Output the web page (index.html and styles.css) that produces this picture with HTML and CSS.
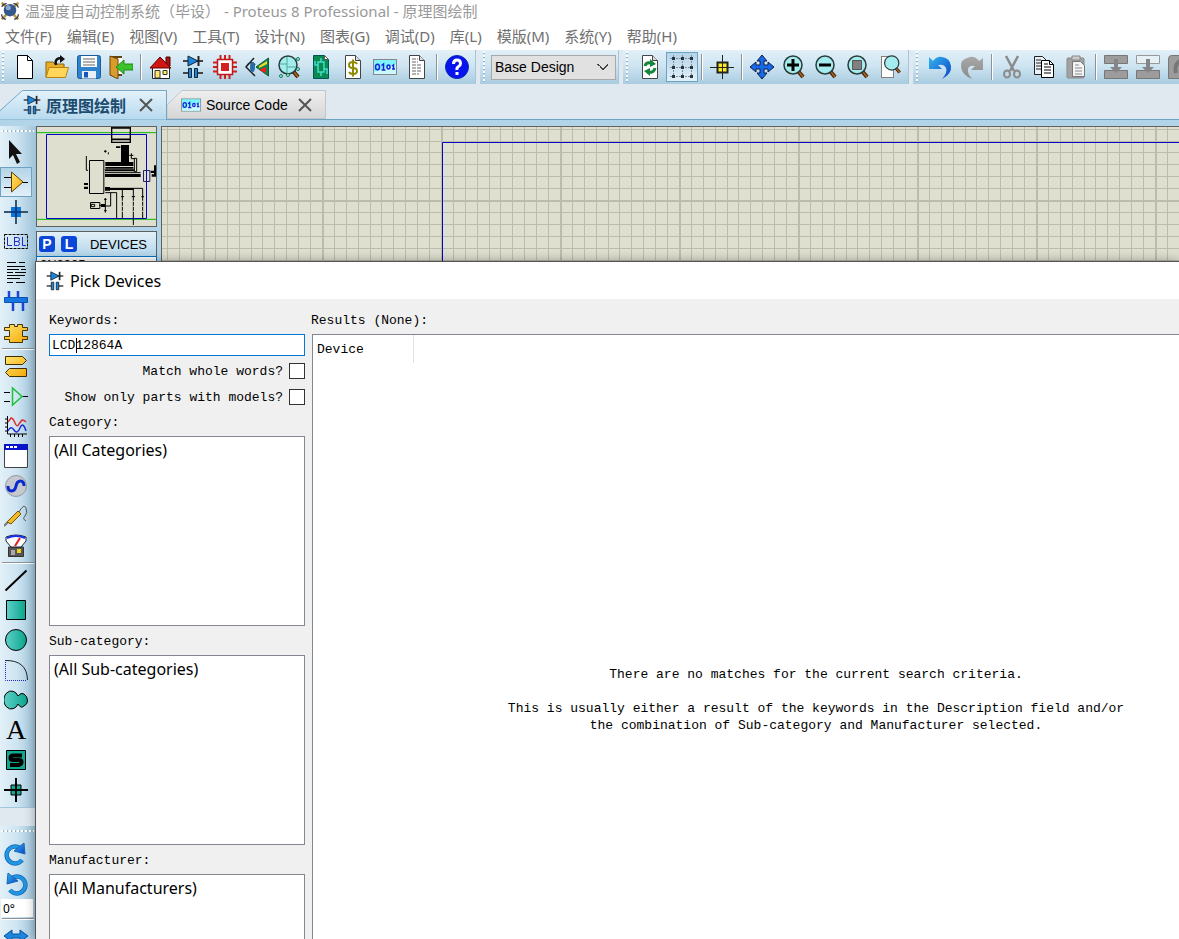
FILE: index.html
```html
<!DOCTYPE html>
<html lang="zh-CN">
<head>
<meta charset="utf-8">
<title>Proteus 8 Professional - 原理图绘制</title>
<link rel="stylesheet" href="styles.css">
</head>
<body>
<svg class="defs" aria-hidden="true">
  <defs>
    <linearGradient id="blue" x1="0" y1="0" x2="1" y2="1"><stop offset="0" stop-color="#35b4ee"/><stop offset="1" stop-color="#0846c8"/></linearGradient>
    <linearGradient id="gold" x1="0" y1="0" x2="1" y2="1"><stop offset="0" stop-color="#ffe36b"/><stop offset="1" stop-color="#f5a90a"/></linearGradient>
    <linearGradient id="teal" x1="0" y1="0" x2="1" y2="0"><stop offset="0" stop-color="#5fd0c8"/><stop offset="1" stop-color="#0aa58d"/></linearGradient>
    <linearGradient id="grey" x1="0" y1="0" x2="0" y2="1"><stop offset="0" stop-color="#a8a8a8"/><stop offset="1" stop-color="#8a8a8a"/></linearGradient>
    <linearGradient id="tabOn" x1="0" y1="0" x2="0" y2="1"><stop offset="0" stop-color="#e4f2fb"/><stop offset="1" stop-color="#b6d9ee"/></linearGradient>
    <linearGradient id="tabOff" x1="0" y1="0" x2="0" y2="1"><stop offset="0" stop-color="#efefef"/><stop offset="1" stop-color="#d6d6d6"/></linearGradient>
    <symbol id="schematic" viewBox="0 0 24 24">
      <path d="M2 6h20M2 18h6M16 18h6" stroke="#444" stroke-width="2"/>
      <path d="M7 1v10l10-5z" fill="#1b86dc" stroke="#123" stroke-width="1"/>
      <path d="M17.500 1v10" stroke="#222" stroke-width="2"/>
      <path d="M7.500 13.500h3v9h-3zM13.500 13.500h3v9h-3z" fill="#1b86dc" stroke="#123"/>
    </symbol>
    <symbol id="lens" viewBox="0 0 24 24">
      <path d="M16 16l5 6" stroke="#3b2008" stroke-width="4"/><path d="M17 17l4 5" stroke="#a8641c" stroke-width="2"/>
      <circle cx="11" cy="10" r="9" fill="#a5ecee" stroke="#2b3c3c" stroke-width="1.500"/>
    </symbol>
    <symbol id="sheet" viewBox="0 0 24 24"><path d="M4.500.500h10l5 5v18h-15z" fill="#fff" stroke="#444"/><path d="M14.500.500v5h5" fill="#ddd" stroke="#444"/></symbol>
    <symbol id="source" viewBox="0 0 24 16">
      <rect x=".5" y=".5" width="23" height="15" fill="#7df3fb" stroke="#888"/><path d="M1 13L23 5v10H1z" fill="#fff" opacity=".6"/>
      <g fill="none" stroke="#1524d8" stroke-width="1.500"><ellipse cx="4.500" cy="8" rx="2" ry="2.800"/><path d="M8.500 6.500l2-1.500v6M8.500 11h4"/><ellipse cx="15.500" cy="8" rx="1.500" ry="2"/><path d="M19 7l1.500-1v4M19 10h3"/></g>
    </symbol>
    <symbol id="turn" viewBox="0 0 24 24"><path d="M18 18A8.500 8.500 0 1 1 16 6" fill="none" stroke="#1768b8" stroke-width="4.500"/><path d="M18 18A8.500 8.500 0 1 1 16 6" fill="none" stroke="#2196e3" stroke-width="3"/><path d="M20 1l1 11-11-3z" fill="url(#blue)" stroke="#1768b8"/></symbol>
  </defs>
</svg>

<header class="titlebar">
  <svg class="logo" viewBox="0 0 24 24"><path d="M2 2l20 20M22 2L2 22" stroke="#b89a4a" stroke-width="3"/><path d="M2 7q2-4 6-4M16 3q5 0 6 5M2 16q0 5 5 6M22 16q0 5-5 6" fill="none" stroke="#334" stroke-width="1.500"/><circle cx="12" cy="11" r="7.500" fill="#34588e"/><circle cx="10" cy="8" r="3" fill="#8caace"/></svg>
  <h1>温湿度自动控制系统（毕设） - Proteus 8 Professional - 原理图绘制</h1>
</header>
<nav class="menubar">
  <button>文件(F)</button><button>编辑(E)</button><button>视图(V)</button><button>工具(T)</button><button>设计(N)</button><button>图表(G)</button><button>调试(D)</button><button>库(L)</button><button>模版(M)</button><button>系统(Y)</button><button>帮助(H)</button>
</nav>

<div class="toolbars">
  <div class="group first">
    <button aria-label="New"><svg viewBox="0 0 24 24"><path d="M4.500.500h10l5 5v18h-15z" fill="#fff" stroke="#000"/><path d="M14.500.500v5h5" fill="none" stroke="#000"/></svg></button>
    <button aria-label="Open"><svg viewBox="0 0 24 24"><path d="M1 22V7h7l2 2h9v4" fill="#e9ae26" stroke="#8a6410"/><path d="M1 22.500l3-10h19.500l-3 10z" fill="#ffd65a" stroke="#b98310"/><path d="M11 10q-2-7 6-7" fill="none" stroke="#111" stroke-width="2.500"/><path d="M15 0l5 4-5 4z" fill="#111"/></svg></button>
    <button aria-label="Save"><svg viewBox="0 0 24 24"><rect x=".5" y=".5" width="23" height="23" rx="2" fill="#2e83cc" stroke="#1a5c9c"/><path d="M4 1h16v11H4z" fill="#fff"/><path d="M6 4h12M6 7h12M6 10h12" stroke="#999" stroke-width="1.500"/><path d="M5 16h14v7.500H5z" fill="#e8eef5"/><path d="M7 17h4v5.500H7z" fill="#1556b8"/></svg></button>
    <button aria-label="Close"><svg viewBox="0 0 24 24"><path d="M1 1h12v20H1z" fill="#5f4310"/><path d="M4 3h9v16H4z" fill="#fff"/><path d="M1 1l8 3v20l-8-4z" fill="#d99b2b" stroke="#6a4508"/><path d="M7 12l8-7v4h9v6h-9v4z" fill="#3cc22a" stroke="#238a18"/></svg></button>
    <i class="sep"></i>
    <button aria-label="Home"><svg viewBox="0 0 24 24"><path d="M17 2h4v9h-4z" fill="#a11" stroke="#500"/><path d="M3.500 12h17v11.500h-17z" fill="#fff" stroke="#222"/><path d="M1 13L11 2l11 11z" fill="#cf1515" stroke="#600"/><path d="M6 15.500h5V23H6z" fill="#ffe566" stroke="#333"/><path d="M14 15.500h4v4h-4z" fill="#ffee50" stroke="#333"/></svg></button>
    <button aria-label="Schematic"><svg><use href="#schematic"/></svg></button>
    <button aria-label="PCB"><svg viewBox="0 0 24 24"><path d="M7.500 0v24M12 0v24M16.500 0v24M0 7.500h24M0 12h24M0 16.500h24" stroke="#d02020" stroke-width="2"/><rect x="4.500" y="4.500" width="15" height="15" fill="#fff" stroke="#c01818" stroke-width="1.500"/><rect x="8" y="8" width="8" height="8" fill="#d32020"/></svg></button>
    <button aria-label="3D viewer"><svg viewBox="0 0 24 24"><path d="M9 3L1 12l9 9M1 12q5-8 9-2" fill="none" stroke="#222" stroke-width="1.500"/><ellipse cx="7.500" cy="12" rx="2.500" ry="5" fill="#236eaa"/><path d="M11 12L23.500 3v18z" fill="#13824c" stroke="#0a5c35"/><path d="M14 11l8-5v3l-8 4z" fill="#f5dd20"/><path d="M14 15l7-3v6z" fill="#f02020"/></svg></button>
    <button aria-label="Gerber"><svg viewBox="0 0 24 24"><use href="#lens"/><path d="M3 9h7V2M10 9v9M10 12h9M17 4l4-1" fill="none" stroke="#4fa99a"/><g fill="#a5ecde" stroke="#147a55"><circle cx="4" cy="21" r="1.500"/><circle cx="11" cy="20" r="1.500"/><circle cx="21" cy="4" r="1.500"/><circle cx="21" cy="14" r="1.500"/></g></svg></button>
    <button aria-label="Design explorer"><svg viewBox="0 0 24 24"><path d="M4.500.500h11l4 4v19h-15z" fill="#0a8a50" stroke="#055"/><path d="M15.500.500v4h4z" fill="#fff" stroke="#555"/><path d="M9 7h6v10H9zM12 7V3M12 17v4M9 10H6v-4M15 14h3v5" fill="none" stroke="#43dcc8" stroke-width="1.500"/></svg></button>
    <button aria-label="Bill of materials"><svg viewBox="0 0 24 24"><use href="#sheet"/><path d="M16 9q-1-2-4-2-4 0-4 3t4 3q4 0 4 3t-4 3q-3 0-4-2M12 4.500v17" fill="none" stroke="#8c8a00" stroke-width="2"/></svg></button>
    <button aria-label="Source code"><svg viewBox="0 0 24 16"><use href="#source"/></svg></button>
    <button aria-label="Notes"><svg viewBox="0 0 24 24"><use href="#sheet"/><path d="M7 4h6M7 7h6M7 10h10M7 13h10M7 16h10M7 19h7" stroke="#666" stroke-dasharray="4 1"/></svg></button>
    <i class="sep"></i>
    <button aria-label="Help"><svg viewBox="0 0 24 24"><circle cx="12" cy="12" r="11.500" fill="#0714ee" stroke="#0c2bb0"/><path d="M8.500 9q0-4 3.500-4t3.500 3.500q0 2-2 3T12 15" fill="none" stroke="#fff" stroke-width="3"/><rect x="10.500" y="17" width="3" height="3" fill="#fff"/></svg></button>
  </div>
  <div class="group">
    <select class="design" aria-label="Design"><option>Base Design</option></select>
  </div>
  <div class="group">
    <button aria-label="Redraw"><svg viewBox="0 0 24 24"><use href="#sheet"/><path d="M7 11q1-4 6-3M17 13q-1 5-6 4" fill="none" stroke="#17853b" stroke-width="3"/><path d="M12 4l6 5-6 3zM12 21l-6-5 6-3z" fill="#17853b"/></svg></button>
    <button class="pressed" aria-label="Grid"><svg viewBox="0 0 24 24"><path d="M0 3.500h24M0 12.500h24M0 21.500h24M3.500 0v24M12.500 0v24M21.500 0v24" stroke="#7d909e" stroke-dasharray="2 1"/><path d="M2 3.500h3M11 3.500h3M20 3.500h3M2 12.500h3M11 12.500h3M20 12.500h3M2 21.500h3M11 21.500h3M20 21.500h3" stroke="#26323c" stroke-width="3"/></svg></button>
    <i class="sep"></i>
    <button aria-label="Origin"><svg viewBox="0 0 24 24"><path d="M7.500 7.500h10v10h-10z" fill="#ffe81c" stroke="#222" stroke-width="2"/><path d="M0 12.500h24M12.500 0v24" stroke="#222"/></svg></button>
    <i class="sep"></i>
    <button aria-label="Pan"><svg viewBox="0 0 24 24"><path d="M12 0l5 6h-3v4h4V7l6 5-6 5v-3h-4v4h3l-5 6-5-6h3v-4H6v3l-6-5 6-5v3h4V6H7z" fill="#1769e8" stroke="#0b1c48"/></svg></button>
    <button aria-label="Zoom in"><svg viewBox="0 0 24 24"><use href="#lens"/><path d="M5 10h12M11 4v12" stroke="#000" stroke-width="3"/></svg></button>
    <button aria-label="Zoom out"><svg viewBox="0 0 24 24"><use href="#lens"/><path d="M5 10h12" stroke="#000" stroke-width="3"/></svg></button>
    <button aria-label="Zoom all"><svg viewBox="0 0 24 24"><use href="#lens"/><path d="M6.500 5.500h9v9h-9z" fill="#808080" stroke="#555"/></svg></button>
    <button aria-label="Zoom area"><svg viewBox="0 0 24 24"><path d="M3 1h13v22H3z" fill="#fff"/><path d="M3.500 1.500h12v21h-12z" fill="none" stroke="#000" stroke-dasharray="1 1"/><use href="#lens" x="5" y="0" width="19" height="19"/></svg></button>
  </div>
  <div class="group last">
    <button aria-label="Undo"><svg viewBox="0 0 24 24"><path d="M1 2v12h13l-4-4q6-1 8 3t-4 11q10-5 9-13T14 2q-5-1-9 4z" fill="url(#blue)"/></svg></button>
    <button aria-label="Redo"><svg viewBox="0 0 24 24"><path d="M23 3v12H11l4-4q-6-1-7 3t4 10Q2 20 1 12t9-10q5-1 9 4z" fill="url(#grey)"/></svg></button>
    <i class="sep"></i>
    <button aria-label="Cut"><svg viewBox="0 0 24 24"><path d="M6 1l8 15M18 1l-8 15" stroke="#8b8b8b" stroke-width="2.500"/><g fill="none" stroke="#8b8b8b" stroke-width="2"><ellipse cx="7" cy="19" rx="3" ry="3.500"/><ellipse cx="17" cy="19" rx="3" ry="3.500"/></g></svg></button>
    <button aria-label="Copy"><svg viewBox="0 0 24 24"><path d="M2.500 1.500h8l4 4v14h-12z" fill="#e9f1f8" stroke="#222"/><path d="M4 5h5M4 8h5M4 11h5M4 14h5" stroke="#222"/><path d="M9.500 5.500h8l4 4v13h-12z" fill="#fff" stroke="#000"/><path d="M17.500 5.500v4h4M12 9h4M12 12h7M12 15h7M12 18h7" fill="none" stroke="#000"/></svg></button>
    <button aria-label="Paste"><svg viewBox="0 0 24 24"><rect x="3" y="3" width="17" height="20" rx="1" fill="#a2a2a2" stroke="#888"/><path d="M8 1h8v4H8z" fill="#ccc" stroke="#888"/><path d="M8.500 6.500h8l4 4v11h-12z" fill="#f4f4f4" stroke="#777"/><path d="M11 10h4M11 13h7M11 16h7M11 19h7" stroke="#888"/></svg></button>
    <i class="sep"></i>
    <button aria-label="Block copy"><svg viewBox="0 0 24 24"><path d="M.5.500h23v8H.5zM.5 15.500h23v8H.5z" fill="#9c9c9c" stroke="#777"/><path d="M10 4h4v8h4l-6 6-6-6h4z" fill="#858585"/></svg></button>
    <button aria-label="Block move"><svg viewBox="0 0 24 24"><path d="M.5.500h23v8H.5z" fill="#e6f0f7" stroke="#999"/><path d="M.5 15.500h23v8H.5z" fill="#9c9c9c" stroke="#777"/><path d="M10 4h4v8h4l-6 6-6-6h4z" fill="#858585"/></svg></button>
    <button aria-label="Block rotate"><svg viewBox="0 0 24 24"><path d="M.5 4q0-3.500 3-3.500h20v23H.5z" fill="#9c9c9c" stroke="#777"/><path d="M8 18q-2-8 4-12" fill="none" stroke="#777" stroke-width="4"/></svg></button>
  </div>
</div>

<div class="tabs">
  <div class="tab on">
    <svg class="shape" viewBox="0 0 167 32" preserveAspectRatio="none"><path d="M-1 23L22.500.500h144V32H-1z" fill="url(#tabOn)" stroke="#6fa3c4"/></svg>
    <svg class="ico" viewBox="0 0 24 24"><use href="#schematic"/></svg><span>原理图绘制</span>
    <button aria-label="Close tab"><svg viewBox="0 0 14 14"><path d="M1 1l12 12M13 1L1 13" stroke="#555" stroke-width="2"/></svg></button>
  </div>
  <div class="tab off">
    <svg class="shape" viewBox="0 0 159 29" preserveAspectRatio="none"><path d="M0 15L15 .5h143.500V28.500H0z" fill="url(#tabOff)" stroke="#c2c6ca"/></svg>
    <svg class="ico wide" viewBox="0 0 24 16"><use href="#source"/></svg><span>Source Code</span>
    <button aria-label="Close tab"><svg viewBox="0 0 14 14"><path d="M1 1l12 12M13 1L1 13" stroke="#555" stroke-width="2"/></svg></button>
  </div>
</div>

<main class="work">
  <aside class="modes">
    <div class="strip">
      <button aria-label="Select"><svg viewBox="0 0 24 24"><path d="M5 0v19l4-4 4 9 3-2-4-8h6z" fill="#111"/></svg></button>
      <button class="pressed" aria-label="Component"><svg viewBox="0 0 24 24"><path d="M0 7.500h8M0 17.500h8M18 12.500h6" stroke="#000"/><path d="M7.500 2v20L19 12z" fill="url(#gold)" stroke="#5c3f00"/></svg></button>
      <button aria-label="Junction"><svg viewBox="0 0 24 24"><path d="M0 12h24M12 0v24" stroke="#35566e" stroke-width="2"/><path d="M7 7h10v10H7z" fill="#0a76d8"/><path d="M12 7v10M7 12h10" stroke="#063e86" stroke-width="2"/></svg></button>
      <button aria-label="Label"><svg viewBox="0 0 24 24"><rect x=".5" y="4.500" width="23" height="14" fill="none" stroke="#000" stroke-dasharray="3 1"/><path d="M3.500 7v8.500H8M10.500 7v8.500h3q2 0 2-2t-2-2h-3h3q2 0 2-2t-2-2h-3M18.500 7v8.500H22" fill="none" stroke="#1c28c8"/></svg></button>
      <button aria-label="Text script"><svg viewBox="0 0 24 24"><path d="M3 2.500h9M15 2.500h6M3 6.500h18M3 9.500h12M17 9.500h5M3 12.500h6M11 12.500h11M3 15.500h18M3 18.500h13M3 22.500h6M12 22.500h9" stroke="#000"/></svg></button>
      <button aria-label="Bus"><svg viewBox="0 0 24 24"><path d="M5 1v8M14 1v8M9 13v8M19 13v8" stroke="#1846d8" stroke-width="2.500"/><path d="M.5 7.500h23v5H.5z" fill="#1677e0" stroke="#0c50b8"/></svg></button>
      <button aria-label="Subcircuit"><svg viewBox="0 0 24 24"><path d="M5.500 4.500h5v2h3v-2h5v3h5v3h-5v6h5v3h-5v3h-13v-3h-5v-3h5v-6h-5v-3h5z" fill="url(#gold)" stroke="#4a3500"/></svg></button>
      <i class="hsep"></i>
      <button aria-label="Terminal"><svg viewBox="0 0 24 24"><path d="M1.500 2.500h17l4 4-4 4h-17zM22.500 14.500h-17l-4 4 4 4h17z" fill="url(#gold)" stroke="#3f2e00"/></svg></button>
      <button aria-label="Device pin"><svg viewBox="0 0 24 24"><path d="M0 8.500h6M0 17.500h6M18 12.500h6" stroke="#000"/><path d="M8.500 4v17L18 12.500z" fill="none" stroke="#20c038" stroke-width="1.500"/></svg></button>
      <button aria-label="Graph"><svg viewBox="0 0 24 24"><path d="M3.500 2v18H23M1 5h2M1 9h2M1 13h2M1 17h2M6.500 20v3M10.500 20v3M14.500 20v3M18.500 20v3" fill="none" stroke="#000"/><path d="M4 8l3-4q2 0 4 5t4 1l3-4q2 0 4 2" fill="none" stroke="#e03030" stroke-width="1.500"/><path d="M4 17q3-6 6-1t6-2 6 3" fill="none" stroke="#1c30d8" stroke-width="1.500"/></svg></button>
      <button aria-label="Active popup"><svg viewBox="0 0 24 24"><path d="M.5.500h23v23H.5z" fill="#fff" stroke="#444"/><path d="M0 0h24v6H0z" fill="#0814c8"/><path d="M2 3h3M6 3h3M10 3h3" stroke="#fff" stroke-width="2"/></svg></button>
      <button aria-label="Generator"><svg viewBox="0 0 24 24"><circle cx="12" cy="12" r="10.500" fill="#c6c8d0" stroke="#999"/><path d="M4 12q0 5 3.500 5t4.500-5 4.500-5 3.500 5" fill="none" stroke="#0828d0" stroke-width="3"/></svg></button>
      <button aria-label="Probe"><svg viewBox="0 0 24 24"><path d="M0 22l7-7" stroke="#777" stroke-width="2"/><path d="M3 18L14 7l3 3L7 20z" fill="#f1bb28" stroke="#7a5500"/><path d="M15 8q5-9 7-4t-1 8 1 5" fill="none" stroke="#555"/></svg></button>
      <button aria-label="Instruments"><svg viewBox="0 0 24 24"><path d="M4.500 13h15v9.500h-15z" fill="#555" stroke="#333"/><path d="M2 3q10-4 20 0v4l-5 6H7L2 7z" fill="#fff" stroke="#223"/><path d="M3 4q9-4 18 0" fill="none" stroke="#1830e8" stroke-width="2"/><path d="M11 12l5-8" stroke="#e02020" stroke-width="2"/><path d="M13 15h4v4h-4z" fill="#f0d020"/><path d="M7 16h4v5H7z" fill="#aaa"/></svg></button>
      <i class="hsep"></i>
      <button aria-label="Line"><svg viewBox="0 0 24 24"><path d="M1.500 22.500l21-20" stroke="#000" stroke-width="2"/></svg></button>
      <button aria-label="Box"><svg viewBox="0 0 24 24"><path d="M2.500 2.500h19v19h-19z" fill="url(#teal)" stroke="#000"/></svg></button>
      <button aria-label="Circle"><svg viewBox="0 0 24 24"><circle cx="12" cy="12" r="10.500" fill="url(#teal)" stroke="#000"/></svg></button>
      <button aria-label="Arc"><svg viewBox="0 0 24 24"><path d="M1 2.500Q23 2 23.500 22" fill="none" stroke="#222"/><path d="M1.500 2v20.500H23" fill="none" stroke="#2424c8" stroke-dasharray="1 1"/></svg></button>
      <button aria-label="Path"><svg viewBox="0 0 24 24"><path d="M14 8A7.500 9 0 1 0 14 16Q17 21 20 18Q24 16 23.500 12T20 6Q17 4 14 8z" fill="url(#teal)" stroke="#000"/></svg></button>
      <button aria-label="Text" class="letter">A</button>
      <button aria-label="Symbol"><svg viewBox="0 0 24 24"><path d="M2.500 2.500h19v19h-19z" fill="#11a890" stroke="#000"/><path d="M18 7.500H9Q6.500 7.500 6.500 10T9 12h6q2.500 0 2.500 2T15 17H6" fill="none" stroke="#000" stroke-width="4"/></svg></button>
      <button aria-label="Marker"><svg viewBox="0 0 24 24"><path d="M7 7h10v10H7z" fill="#11a890" stroke="#000"/><path d="M0 12h24M12 0v24" stroke="#000" stroke-width="2"/></svg></button>
    </div>
    <div class="strip">
      <button aria-label="Rotate clockwise"><svg><use href="#turn"/></svg></button>
      <button aria-label="Rotate anticlockwise"><svg viewBox="0 0 24 24"><path d="M6 18A8.500 8.500 0 1 0 8 6" fill="none" stroke="#1768b8" stroke-width="4.500"/><path d="M6 18A8.500 8.500 0 1 0 8 6" fill="none" stroke="#2196e3" stroke-width="3"/><path d="M4 1L3 12l11-3z" fill="url(#blue)" stroke="#1768b8"/></svg></button>
      <input class="angle" aria-label="Angle" value="0°">
      <i class="hsep"></i>
      <button aria-label="Mirror"><svg viewBox="0 0 24 24"><path d="M0 12l8-6v4h8V6l8 6-8 6v-4H8v4z" fill="#1b86dc" stroke="#0c50a0"/></svg></button>
    </div>
  </aside>
  <aside class="side">
    <svg class="overview" viewBox="111 21 357 297" preserveAspectRatio="none">
      <path d="M111 38h357M111 298h357" stroke="#0ab80a" stroke-width="3"/>
      <path d="M139.500 43.500h300v252h-300z" fill="none" stroke="#0606c4" stroke-width="3"/>
      <g fill="none" stroke="#000" stroke-width="3"><path d="M335 21v46h56V21z" stroke-width="4"/><path d="M335 58h56M335 24h56" stroke-width="5"/><path d="M268.500 121.500h43v99h-43zM259 108v43h5M403 115h7v40h-7zM312 94h8M316 90v8M325 97v6M388 106h12M394 100v16h10M315 158h107M315 205h113v92M400 205v110M367 207v90M350 297V218h-34M332 218v40h-28M316 234v44M271.500 247.500h28v18h-28zM274 253h10v7h-10zM298 256h12M312 238h8M312 272h8M252 192h12M363 230h9M395 230h10M424 230h8"/></g>
      <path d="M363 75h24v51h13v12h-84v-12h47zM316 141h84v5h-84zM315 148h88v6h-88zM315 162h107v9H315zM315 201h15v11h-15zM330 204h70v6h-70zM303 252h12v9h-12zM252 189h12v6h-12zM252 200h12v7h-12zM348 79h13v5h-13zM452 152h16v7h-16zM455 163h13v7h-13zM462 136h6v30h-6z"/>
      <path d="M430.500 151.500h19v33h-19z" fill="none" stroke="#222266" stroke-width="3"/>
      <path d="M367 242v44M400 242v44M428 242v44" stroke="#dfdfd0" stroke-width="4" stroke-dasharray="3 12"/>
    </svg>
    <div class="devhead"><button>P</button><button>L</button><span>DEVICES</span></div>
    <div class="devlist">2N2905</div>
  </aside>
  <section class="canvas">
    <svg>
      <defs><pattern id="grid" x="41" y="73" width="119" height="119" patternUnits="userSpaceOnUse">
        <path d="M12.500 0v119M24.500 0v119M36.500 0v119M48.500 0v119M59.500 0v119M71.500 0v119M83.500 0v119M95.500 0v119M107.500 0v119M0 12.500h119M0 24.500h119M0 36.500h119M0 48.500h119M0 60.500h119M0 71.500h119M0 83.500h119M0 95.500h119M0 107.500h119" stroke="#bcbcac"/>
        <path d="M1 0v119M0 1h119" stroke="#bcbcac" stroke-width="2"/>
      </pattern></defs>
      <rect width="100%" height="100%" fill="url(#grid)"/>
      <path d="M280.500 900V15.500H3000" fill="none" stroke="#0606c4"/>
    </svg>
  </section>
</main>

<div class="dialog" role="dialog" aria-labelledby="dlg">
  <div class="dtitle"><svg viewBox="0 0 24 24"><use href="#schematic"/></svg><h2 id="dlg">Pick Devices</h2></div>
  <div class="dbody">
    <form class="filters">
      <label class="cap" for="kw">Keywords:</label>
      <div class="kw"><input id="kw" value="LCD12864A"><i class="caret"></i></div>
      <div class="check"><label for="whole">Match whole words?</label><input type="checkbox" id="whole"></div>
      <div class="check"><label for="models">Show only parts with models?</label><input type="checkbox" id="models"></div>
      <label class="cap" for="cat">Category:</label>
      <select id="cat" size="8"><option>(All Categories)</option></select>
      <label class="cap" for="sub">Sub-category:</label>
      <select id="sub" size="8"><option>(All Sub-categories)</option></select>
      <label class="cap" for="man">Manufacturer:</label>
      <select id="man" size="8"><option>(All Manufacturers)</option></select>
    </form>
    <section class="results">
      <div class="cap">Results (None):</div>
      <div class="box">
        <table><thead><tr><th>Device</th></tr></thead></table>
        <div class="msg">
          <p>There are no matches for the current search criteria.</p>
          <p>This is usually either a result of the keywords in the Description field and/or<br>the combination of Sub-category and Manufacturer selected.</p>
        </div>
      </div>
    </section>
  </div>
</div>
</body>
</html>
```

FILE: styles.css
```css
* { box-sizing: border-box; }
body {
  margin: 0; height: 100vh; overflow: hidden; position: relative;
  display: flex; flex-direction: column;
  background: #e1e9f0; color: #000;
  font-family: "Noto Sans", "Noto Sans CJK SC", sans-serif; font-size: 15px;
}
button { border: 0; padding: 0; background: none; font: inherit; color: inherit; }
.defs { position: absolute; width: 0; height: 0; }

.titlebar { display: flex; align-items: center; gap: 5px; height: 22px; background: #fff; flex: none; }
.titlebar .logo { width: 20px; height: 20px; }
.titlebar h1 { margin: 0; font-size: 15px; line-height: 20px; font-weight: 400; color: #999; white-space: pre; }
.menubar { display: flex; gap: 15px; padding-left: 5px; height: 28px; background: #fff; flex: none; }
.menubar button { line-height: 28px; color: #707070; white-space: nowrap; }

.toolbars { display: flex; gap: 4px; height: 34px; flex: none; }
.group {
  position: relative; display: flex; align-items: center; padding: 0 2px 0 11px; flex: none;
  background: linear-gradient(#e2f0f8, #cfe5f2 45%, #a9cce0); border-right: 1px solid #a4c6dc;
}
.group.first { padding-left: 9px; }
.group.last { flex: 1 1 0; min-width: 0; overflow: hidden; border-right: 0; padding-right: 0; }
.group::before { content: ""; position: absolute; left: 3px; top: 1px; bottom: 1px; width: 2px; background: repeating-linear-gradient(#fff 0 2px, #9ab4c6 2px 3px, transparent 3px 4px); }
.group.first::before { left: 2px; }
.group button { width: 32px; height: 30px; display: grid; place-items: center; flex: none; }
.group button svg { width: 24px; height: 24px; }
.group .pressed, .strip .pressed { border: 1px solid #6ea2c2; background: linear-gradient(#b4d4e8, #e2f0f8); }
.sep { width: 2px; height: 26px; margin: 0 3px; border-left: 1px solid #8b9298; border-right: 1px solid #fff; flex: none; }
.design {
  width: 125px; height: 25px; border: 1px solid #a8a8a8; border-radius: 0; padding: 0 3px; appearance: none; color: #000;
  font: 14px "Liberation Sans", sans-serif;
  background: linear-gradient(45deg, transparent 50%, #444 50% 60%, transparent 60%) 105px 8px / 6px 6px no-repeat,
    linear-gradient(-45deg, transparent 50%, #444 50% 60%, transparent 60%) 111px 8px / 6px 6px no-repeat, #e1e1e1;
}

.tabs { display: flex; height: 36px; padding-top: 6px; flex: none; border-bottom: 1px solid #6fa3c4; }
.tab { position: relative; display: flex; align-items: center; }
.tab > * { position: relative; }
.tab .shape { position: absolute; inset: 0; width: 100%; height: 100%; }
.tab .ico { width: 20px; height: 20px; }
.tab button { width: 14px; height: 14px; display: grid; margin-left: auto; }
.tab.on { width: 167px; height: 30px; padding: 0 14px 0 22px; font: bold 16px "Noto Sans CJK SC", sans-serif; color: #1d4c70; gap: 4px; }
.tab.off { width: 159px; height: 29px; padding: 0 14px; font: 14px "Liberation Sans", sans-serif; gap: 5px; }
.tab.off .wide { height: 14px; }

.work { flex: 1; display: flex; min-height: 0; padding-top: 6px; background: #b2d4e8; }
.modes { width: 36px; flex: none; background: #e1e9f0; }
.strip { position: relative; display: flex; flex-direction: column; padding: 11px 0 2px; background: linear-gradient(90deg, #e2f0f8, #cfe5f2 45%, #9fc4da); border-bottom: 1px solid #a4c6dc; }
.strip + .strip { margin-top: 18px; padding-top: 13px; }
.strip::before { content: ""; position: absolute; left: 1px; right: 2px; top: 4px; height: 2px; background: repeating-linear-gradient(90deg, #fff 0 2px, #9ab4c6 2px 3px, transparent 3px 4px); }
.strip button { width: 32px; height: 30px; display: grid; place-items: center; flex: none; }
.strip button svg { width: 24px; height: 24px; }
.strip .letter { font: 28px/30px "Liberation Serif", serif; }
.hsep { height: 2px; margin: 1px 2px; border-top: 1px solid #8b9298; border-bottom: 1px solid #fff; flex: none; }
.angle { width: 32px; height: 18px; margin-left: 1px; padding: 0 2px; border: 0; font: 12px "Noto Sans", sans-serif; background: #fff; }

.side { width: 121px; margin-right: 4px; flex: none; display: flex; flex-direction: column; }
.overview { width: 121px; height: 101px; border: 1px solid #606060; background: #dfdfd0; flex: none; margin-bottom: 4px; }
.devhead { display: flex; align-items: center; gap: 6px; height: 25px; padding-left: 2px; border: 1px solid #606060; border-bottom: 0; background: linear-gradient(#e2f0f8, #b4d6ea); flex: none; font: 13px "Liberation Sans", sans-serif; }
.devhead button { width: 16px; height: 16px; border-radius: 3px; background: #0b46d8; color: #fff; font: bold 14px/16px "Liberation Sans", sans-serif; }
.devhead span { margin-left: auto; padding-right: 9px; }
.devlist { flex: 1; border: 1px solid #0a70c0; background: #fff; padding: 0 3px; font: 13px/15px "Liberation Sans", sans-serif; }
.canvas { flex: 1; min-width: 0; border: 1px solid #606060; border-right: 0; background: #dfdfd0; }
.canvas svg { display: block; width: 100%; height: 100%; }

.dialog { position: absolute; left: 35px; top: 261px; right: 0; bottom: 0; display: flex; flex-direction: column; border: 1px solid #555; border-width: 1px 0 0 1px; background: #f0f0f0; box-shadow: 0 0 10px rgba(0, 0, 0, .35); font: 13px "Liberation Mono", monospace; overflow: hidden; }
.dtitle { display: flex; align-items: center; gap: 5px; height: 37px; padding-left: 9px; background: #fff; flex: none; }
.dtitle svg { width: 20px; height: 20px; }
.dtitle h2 { margin: 0; font: 16px "Noto Sans", sans-serif; }
.dbody { flex: 1; min-height: 0; display: flex; gap: 7px; padding: 11px 0 0 13px; }
.filters { width: 256px; flex: none; display: flex; flex-direction: column; }
.cap { display: block; line-height: 22px; flex: none; margin-bottom: 2px; }
.kw { position: relative; margin-bottom: 2px; flex: none; }
.kw input { display: block; width: 100%; height: 22px; padding: 0 2px; border: 1px solid #0078d7; outline: 0; font: 13px "Liberation Mono", monospace; background: #fff; }
.caret { position: absolute; left: 27px; top: 4px; width: 1px; height: 15px; background: #000; }
.check { display: flex; justify-content: flex-end; align-items: center; gap: 6px; height: 26px; flex: none; }
.check + .cap { margin-top: 2px; }
.check input { appearance: none; width: 16px; height: 16px; margin: 0; border: 1px solid #333; background: #fff; }
.filters select { width: 100%; height: 190px; margin-bottom: 5px; padding: 2px 3px; border: 1px solid #828790; border-radius: 0; background: #fff; flex: none; font: 16px "Noto Sans", sans-serif; overflow: hidden; outline: 0; }
.filters option { padding: 0 1px; line-height: 20px; color: #000; }
.results { flex: 1; min-width: 0; display: flex; flex-direction: column; }
.results > .cap { margin-left: -1px; }
.box { flex: 1; border: 1px solid #828790; border-width: 1px 0 0 1px; background: #fff; }
.box table { border-collapse: collapse; }
.box th { width: 100px; height: 28px; padding: 0 4px; border-right: 1px solid #e2e2e2; text-align: left; font-weight: 400; }
.msg { padding: 303px 0 0 140px; text-align: center; line-height: 17px; }
.msg p { margin: 0 0 17px; }
```
